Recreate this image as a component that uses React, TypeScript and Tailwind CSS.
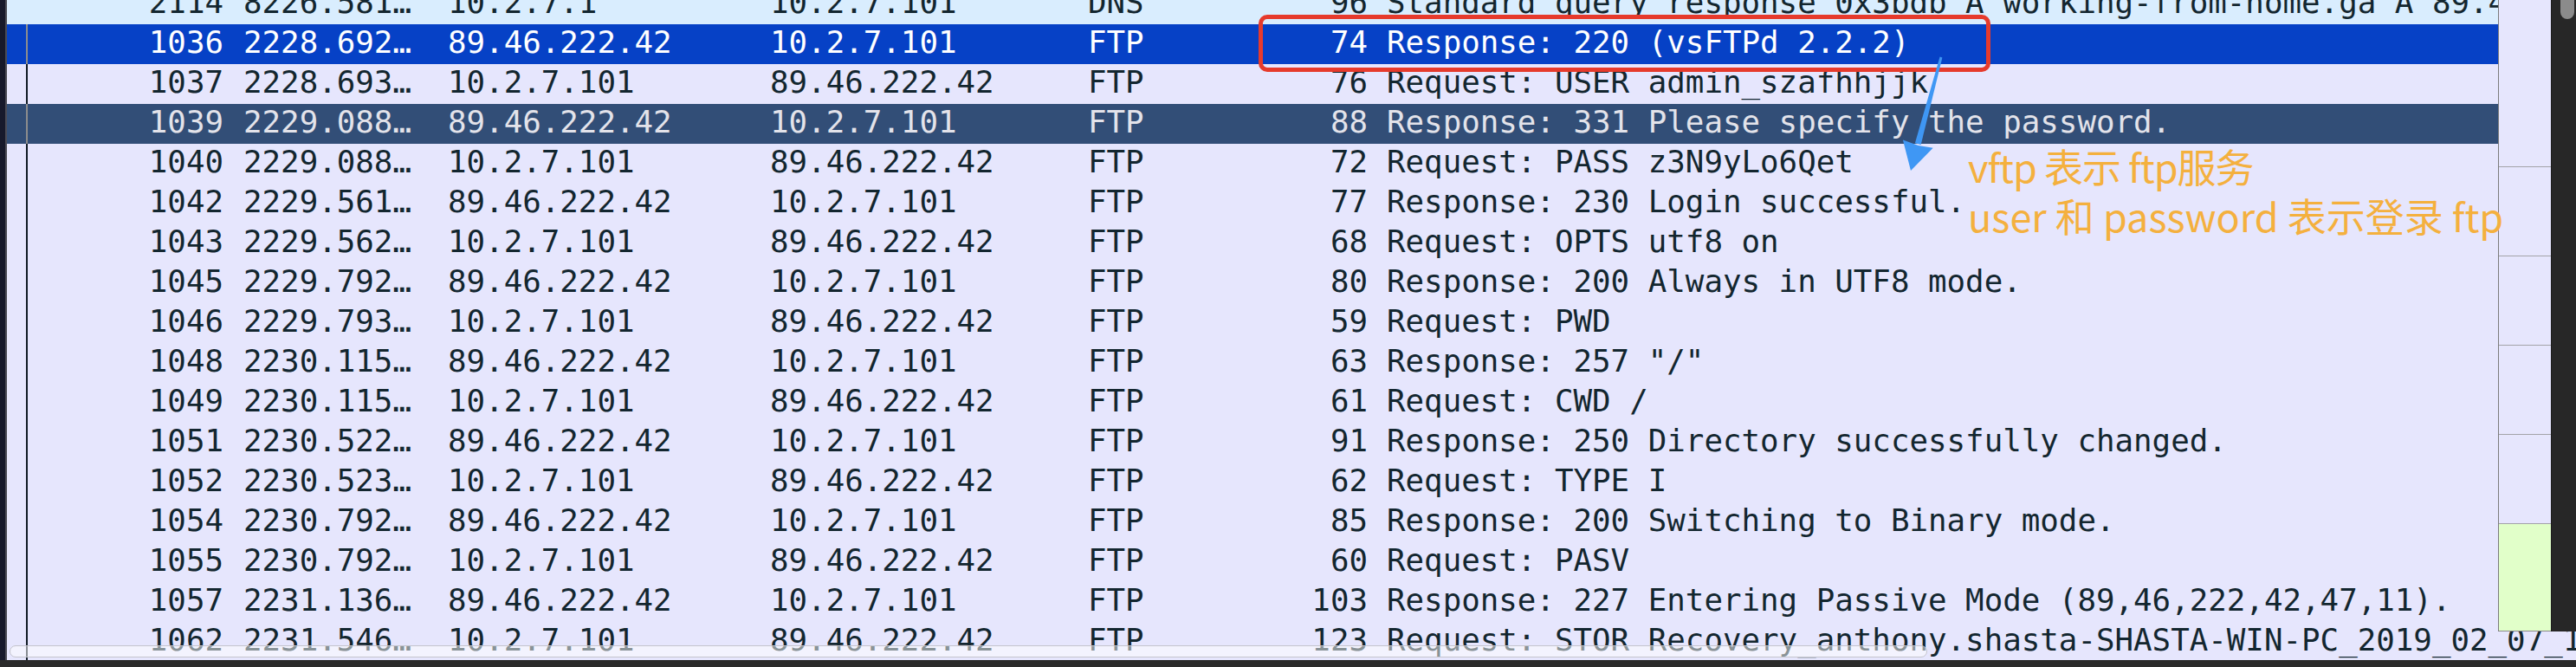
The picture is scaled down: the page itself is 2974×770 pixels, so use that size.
import React from "react";

type Variant = "dns" | "sel" | "dark" | "normal";

interface Pkt {
  no: string;
  time: string;
  src: string;
  dst: string;
  proto: string;
  len: string;
  info: string;
  v: Variant;
}

const rows: Pkt[] = [
  { no: "1036", time: "2228.692…", src: "89.46.222.42", dst: "10.2.7.101", proto: "FTP", len: "74", info: "Response: 220 (vsFTPd 2.2.2)", v: "sel" },
  { no: "1037", time: "2228.693…", src: "10.2.7.101", dst: "89.46.222.42", proto: "FTP", len: "76", info: "Request: USER admin_szafhhjjk", v: "normal" },
  { no: "1039", time: "2229.088…", src: "89.46.222.42", dst: "10.2.7.101", proto: "FTP", len: "88", info: "Response: 331 Please specify the password.", v: "dark" },
  { no: "1040", time: "2229.088…", src: "10.2.7.101", dst: "89.46.222.42", proto: "FTP", len: "72", info: "Request: PASS z3N9yLo6Qet", v: "normal" },
  { no: "1042", time: "2229.561…", src: "89.46.222.42", dst: "10.2.7.101", proto: "FTP", len: "77", info: "Response: 230 Login successful.", v: "normal" },
  { no: "1043", time: "2229.562…", src: "10.2.7.101", dst: "89.46.222.42", proto: "FTP", len: "68", info: "Request: OPTS utf8 on", v: "normal" },
  { no: "1045", time: "2229.792…", src: "89.46.222.42", dst: "10.2.7.101", proto: "FTP", len: "80", info: "Response: 200 Always in UTF8 mode.", v: "normal" },
  { no: "1046", time: "2229.793…", src: "10.2.7.101", dst: "89.46.222.42", proto: "FTP", len: "59", info: "Request: PWD", v: "normal" },
  { no: "1048", time: "2230.115…", src: "89.46.222.42", dst: "10.2.7.101", proto: "FTP", len: "63", info: 'Response: 257 "/"', v: "normal" },
  { no: "1049", time: "2230.115…", src: "10.2.7.101", dst: "89.46.222.42", proto: "FTP", len: "61", info: "Request: CWD /", v: "normal" },
  { no: "1051", time: "2230.522…", src: "89.46.222.42", dst: "10.2.7.101", proto: "FTP", len: "91", info: "Response: 250 Directory successfully changed.", v: "normal" },
  { no: "1052", time: "2230.523…", src: "10.2.7.101", dst: "89.46.222.42", proto: "FTP", len: "62", info: "Request: TYPE I", v: "normal" },
  { no: "1054", time: "2230.792…", src: "89.46.222.42", dst: "10.2.7.101", proto: "FTP", len: "85", info: "Response: 200 Switching to Binary mode.", v: "normal" },
  { no: "1055", time: "2230.792…", src: "10.2.7.101", dst: "89.46.222.42", proto: "FTP", len: "60", info: "Request: PASV", v: "normal" },
  { no: "1057", time: "2231.136…", src: "89.46.222.42", dst: "10.2.7.101", proto: "FTP", len: "103", info: "Response: 227 Entering Passive Mode (89,46,222,42,47,11).", v: "normal" },
  { no: "1062", time: "2231.546…", src: "10.2.7.101", dst: "89.46.222.42", proto: "FTP", len: "123", info: "Request: STOR Recovery_anthony.shasta-SHASTA-WIN-PC_2019_02_07_14_22_31.zip", v: "normal" },
];

const dnsRow: Pkt = {
  no: "2114",
  time: "8226.581…",
  src: "10.2.7.1",
  dst: "10.2.7.101",
  proto: "DNS",
  len: "96",
  info: "Standard query response 0x3bdb A working-from-home.ga A 89.46.222.42",
  v: "dns",
};

const bgFor: Record<Variant, string> = {
  dns: "bg-[#d9edfe] text-[#13262f]",
  sel: "bg-[#0641c6] text-white",
  dark: "bg-[#324e77] text-[#e3e3ea]",
  normal: "bg-[#e6e6fd] text-[#13262f]",
};

const lineFor: Record<Variant, string> = {
  dns: "bg-transparent",
  sel: "bg-[#8d8d8d]",
  dark: "bg-[#8d8d8d]",
  normal: "bg-[#101a24]",
};

function Row({ p }: { p: Pkt }) {
  return (
    <div className={`flex h-[46px] shrink-0 whitespace-nowrap leading-[41px] ${bgFor[p.v]}`}>
      <div className="w-[22px] shrink-0" />
      <div className={`w-[2px] shrink-0 h-full ${lineFor[p.v]}`} />
      <div className="w-[226px] shrink-0 text-right">{p.no}</div>
      <div className="w-[259px] shrink-0 pl-[23px]">{p.time}</div>
      <div className="w-[372px] shrink-0">{p.src}</div>
      <div className="w-[367px] shrink-0">{p.dst}</div>
      <div className="w-[144px] shrink-0">{p.proto}</div>
      <div className="w-[179px] shrink-0 text-right">{p.len}</div>
      <div className="shrink-0 pl-[22px]">{p.info}</div>
    </div>
  );
}

export default function App() {
  return (
    <div
      className="relative w-[2974px] h-[770px] overflow-hidden bg-[#2a2a2a] text-[35.8px]"
      style={{ fontFamily: '"DejaVu Sans Mono", "Liberation Mono", monospace' }}
    >
      <div className="flex h-[762px]">
        {/* left window edge */}
        <div className="w-[6px] shrink-0 bg-[#17192b]" />
        <div className="w-[2px] shrink-0 bg-[#4b4b55]" />
        {/* packet list */}
        <div className="flex-1 flex flex-col overflow-hidden bg-[#e6e6fd]">
          <div className="h-[28px] shrink-0 overflow-hidden">
            <div className="-mt-[18px]">
              <Row p={dnsRow} />
            </div>
          </div>
          {rows.map((r) => (
            <Row key={r.no} p={r} />
          ))}
        </div>
      </div>
      <div className="h-[8px] bg-[#2a2a2a]" />

      {/* horizontal overlay scrollbar */}
      <div className="absolute left-[11px] top-[745px] w-[2214px] h-[14px] rounded-full bg-white/50 border border-[#c4c4cc]" />

      {/* intelligent scrollbar / minimap + vertical scrollbar */}
      <div className="absolute top-0 right-0 h-[729px] w-[90px] flex">
        <div className="w-[61px] h-full flex flex-col border-l border-[#7c7c7c] bg-[#e6e6fd]">
          <div className="h-[193px] border-b border-[#a3a3a8]" />
          <div className="h-[103px] border-b border-[#a3a3a8]" />
          <div className="h-[103px] border-b border-[#a3a3a8]" />
          <div className="h-[103px] border-b border-[#a3a3a8]" />
          <div className="h-[103px] border-b border-[#a3a3a8]" />
          <div className="flex-1 bg-[#e1ffc9] border-b border-[#8a8a8a]" />
        </div>
        <div className="w-[29px] h-full bg-[#272727] border-l border-[#1c1c1c] pl-[10px]">
          <div className="w-[16px] h-[22px] rounded-b-full bg-[#8b8b8b]" />
        </div>
      </div>

      {/* annotation: red box */}
      <div className="absolute left-[1453px] top-[17px] w-[845px] h-[66px] rounded-[10px] border-[5px] border-[#e63a2c]" />

      {/* annotation: blue arrow */}
      <svg className="absolute inset-0 pointer-events-none" width="2974" height="770" viewBox="0 0 2974 770">
        <polygon
          points="2242.4,66.4 2239.6,65.6 2210.9,165.2 2217.7,167.0"
          fill="#3f97f4"
        />
        <polygon
          points="2206,197 2231.7,170.7 2214.8,168 2196.9,161.5"
          fill="#3f97f4"
        />
      </svg>

      {/* annotation: orange text */}
      <div
        className="absolute left-[2272px] top-[163px] text-[45px] leading-[57px] text-[#f4b03e] whitespace-nowrap"
        style={{ fontFamily: '"Noto Sans CJK SC", "Noto Sans", sans-serif' }}
      >
        <div className="tracking-[-1px]">vftp 表示 ftp服务</div>
        <div>user 和 password 表示登录 ftp</div>
      </div>
    </div>
  );
}
